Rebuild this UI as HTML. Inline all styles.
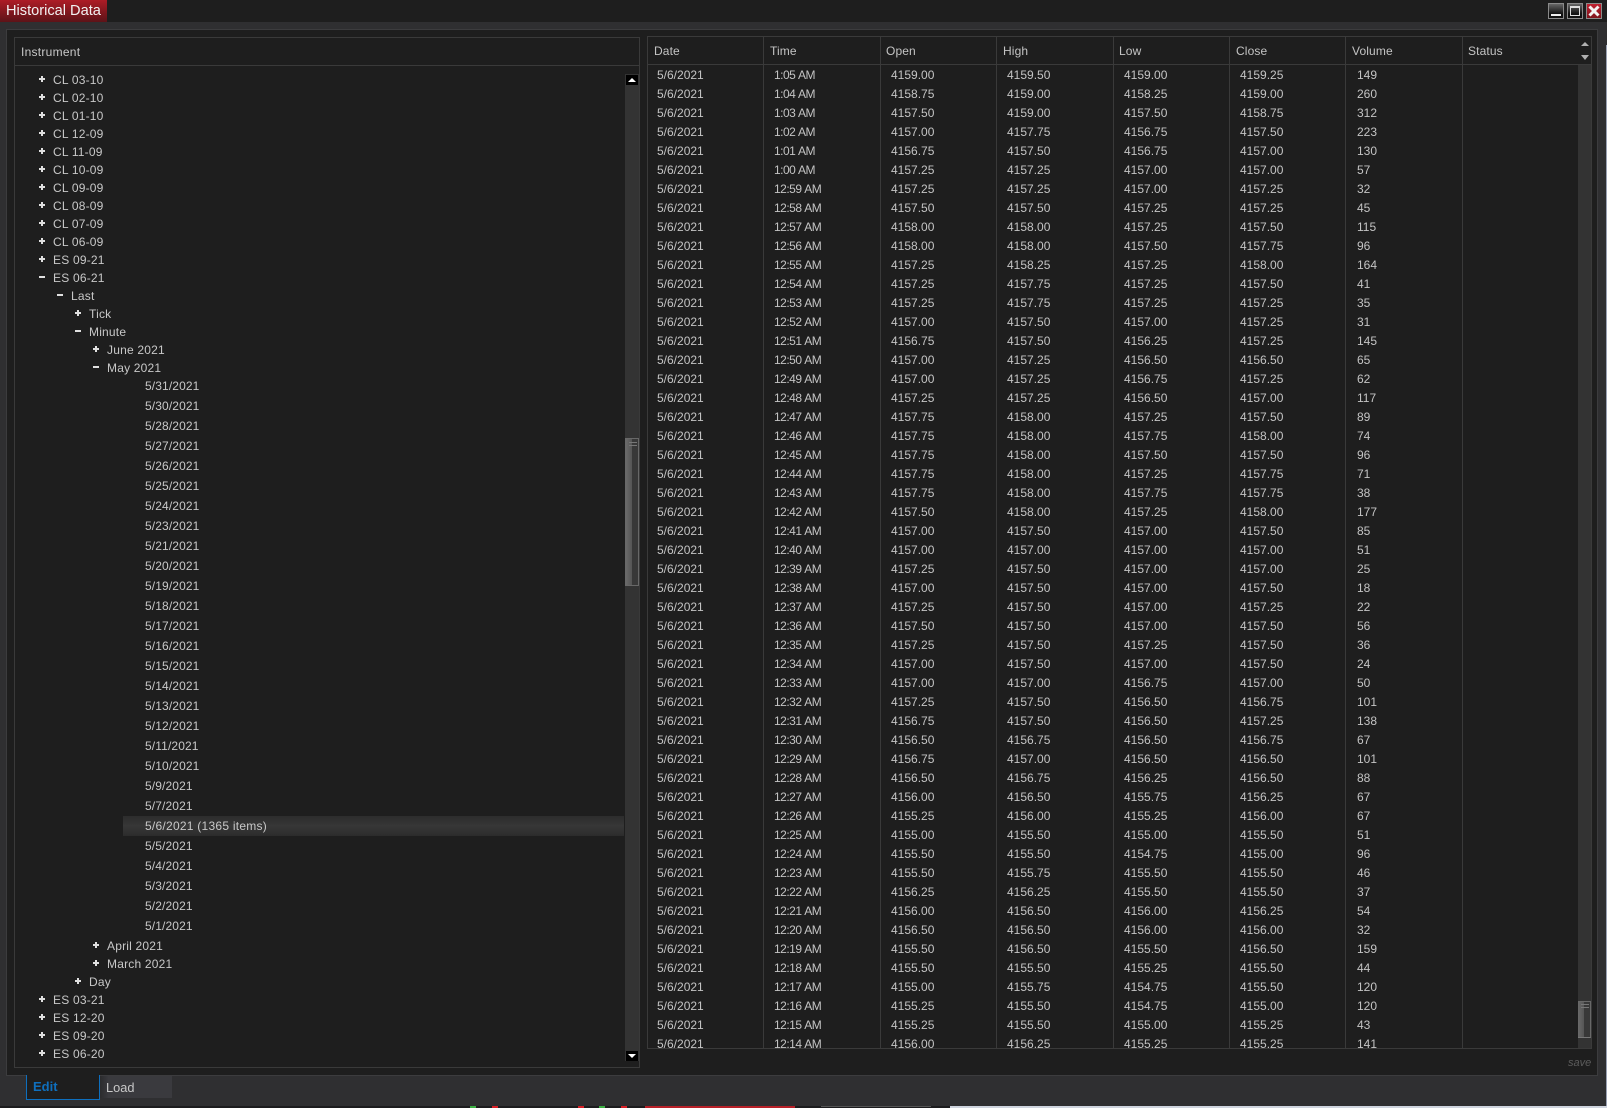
<!DOCTYPE html>
<html><head><meta charset="utf-8"><title>Historical Data</title>
<style>
html,body{margin:0;padding:0;background:#2f2f31}
body{position:relative;width:1607px;height:1108px;overflow:hidden;font:12px "Liberation Sans",Arial,sans-serif;color:#c8c8c8}
.a{position:absolute;box-sizing:border-box}
#top{left:0;top:0;width:1607px;height:22px;background:#1e1e1e}
#title{left:0;top:0;width:107px;height:22px;background:linear-gradient(#ad1c26,#5d1318);color:#f2f2f2;font-size:14.6px;line-height:23px;padding-left:6px;white-space:nowrap}
.b{top:3px;width:16px;height:16px;border:1px solid #8a8a8a;background:linear-gradient(#666,#111 70%)}
#main{left:6px;top:29px;width:1592px;height:1047px;background:#1e1e1e;border:1px solid #3c3c3e}
#left{left:14px;top:37px;width:626px;height:1031px;border:1px solid #3a3a3a}
#lh{left:14px;top:37px;width:626px;height:29px;border:1px solid #3a3a3a;line-height:29px;padding-left:6px;letter-spacing:.26px}
#tree{left:0;top:70px;width:625px}
.t{position:relative;height:18px;line-height:18px;white-space:nowrap;letter-spacing:.2px}
.d{position:relative;height:20px;line-height:20px;padding-left:145px;letter-spacing:.12px}
.l0{padding-left:53px}.l1{padding-left:71px}.l2{padding-left:89px}.l3{padding-left:107px}
.p:before,.m:before{content:"";position:absolute;height:2px;width:6px;top:7px;background:#e0e0e0}
.p:after{content:"";position:absolute;height:6px;width:2px;top:5px;background:#e0e0e0}
.l0:before{left:39px}.l0.p:after{left:41px}
.l1:before{left:57px}.l1.p:after{left:59px}
.l2:before{left:75px}.l2.p:after{left:77px}
.l3:before{left:93px}.l3.p:after{left:95px}
#sel{background:linear-gradient(#2c2c2c,#373737 50%,#2c2c2c);margin-left:123px;padding-left:22px;width:501px;box-sizing:border-box;letter-spacing:.25px}
#ltrack{left:625px;top:74px;width:14px;height:987px;background:#333}
.ab{left:626px;width:12px;height:10px;background:#000}
.th{border:1px solid #686868;background:linear-gradient(90deg,#6a6a6a,#555 50%,#383838 52%,#383838)}
.g{height:1px;background:#777}
#tbl{left:647px;top:36px;width:945px;height:1013px;border:1px solid #3a3a3a;overflow:hidden}
#hd{left:647px;top:36px;width:945px;height:29px;border:1px solid #3a3a3a}
.v{top:36px;width:1px;height:1012px;background:#3a3a3a}
.h{top:37px;line-height:28px;color:#c4c4c4;letter-spacing:.12px}
#rows{left:0;top:65px;width:1578px;height:983px;overflow:hidden}
.r{position:relative;height:19px;line-height:19px;color:#c4c4c4;white-space:nowrap;top:1px}
.r i{position:absolute;font-style:normal;top:0}
.r i:nth-child(1){left:657px}.r i:nth-child(2){left:774px;letter-spacing:-.5px;word-spacing:.5px}.r i:nth-child(3){left:891px}.r i:nth-child(4){left:1007px}.r i:nth-child(5){left:1124px}.r i:nth-child(6){left:1240px}.r i:nth-child(7){left:1357px}
#rtrack{left:1578px;top:64px;width:13px;height:984px;background:#333}
#rcap{left:1578px;top:37px;width:13px;height:27px;background:#1e1e1e}
.tri{width:0;height:0;border-left:4px solid transparent;border-right:4px solid transparent}
</style></head><body>
<div class="a" id="top"></div>
<div class="a" id="title">Historical Data</div>
<div class="a b" style="left:1548px"><div class="a" style="left:2px;top:10px;width:10px;height:2px;background:#eee"></div></div>
<div class="a b" style="left:1567px"><div class="a" style="left:2px;top:2px;width:10px;height:10px;border:1px solid #ddd;border-top-width:2px"></div></div>
<div class="a b" style="left:1586px;background:linear-gradient(#c02030,#7d141c)"><svg class="a" style="left:1px;top:1px" width="12" height="12" viewBox="0 0 12 12"><path d="M1.5 1.5L10.5 10.5M10.5 1.5L1.5 10.5" stroke="#f2f2f2" stroke-width="3" fill="none"/></svg></div>
<div class="a" style="left:1606px;top:45px;width:1px;height:1061px;background:#9aa2b4"></div>
<div class="a" id="main"></div>
<div class="a" id="left">
<div class="a" id="tree" style="left:-15px;top:33px">
<div class="t l0 p">CL 03-10</div><div class="t l0 p">CL 02-10</div><div class="t l0 p">CL 01-10</div><div class="t l0 p">CL 12-09</div><div class="t l0 p">CL 11-09</div><div class="t l0 p">CL 10-09</div><div class="t l0 p">CL 09-09</div><div class="t l0 p">CL 08-09</div><div class="t l0 p">CL 07-09</div><div class="t l0 p">CL 06-09</div><div class="t l0 p">ES 09-21</div><div class="t l0 m">ES 06-21</div>
<div class="t l1 m">Last</div><div class="t l2 p">Tick</div><div class="t l2 m">Minute</div><div class="t l3 p">June 2021</div><div class="t l3 m">May 2021</div>
<div style="margin-top:-1px"></div>
<div class="d">5/31/2021</div><div class="d">5/30/2021</div><div class="d">5/28/2021</div><div class="d">5/27/2021</div><div class="d">5/26/2021</div><div class="d">5/25/2021</div><div class="d">5/24/2021</div><div class="d">5/23/2021</div><div class="d">5/21/2021</div><div class="d">5/20/2021</div><div class="d">5/19/2021</div><div class="d">5/18/2021</div><div class="d">5/17/2021</div><div class="d">5/16/2021</div><div class="d">5/15/2021</div><div class="d">5/14/2021</div><div class="d">5/13/2021</div><div class="d">5/12/2021</div><div class="d">5/11/2021</div><div class="d">5/10/2021</div><div class="d">5/9/2021</div><div class="d">5/7/2021</div>
<div class="d" id="sel">5/6/2021 (1365 items)</div>
<div class="d">5/5/2021</div><div class="d">5/4/2021</div><div class="d">5/3/2021</div><div class="d">5/2/2021</div><div class="d">5/1/2021</div>
<div style="height:1px"></div>
<div class="t l3 p">April 2021</div><div class="t l3 p">March 2021</div><div class="t l2 p">Day</div><div class="t l0 p">ES 03-21</div><div class="t l0 p">ES 12-20</div><div class="t l0 p">ES 09-20</div><div class="t l0 p">ES 06-20</div>
</div>
</div>
<div class="a" id="lh">Instrument</div>
<div class="a" id="ltrack"></div>
<div class="a ab" style="top:75px"><div class="a tri" style="left:2px;top:3px;border-bottom:4px solid #fff"></div></div>
<div class="a ab" style="top:1051px"><div class="a tri" style="left:2px;top:3px;border-top:4px solid #fff"></div></div>
<div class="a th" style="left:625px;top:438px;width:14px;height:148px"><div class="a g" style="left:3px;top:3px;width:8px"></div><div class="a g" style="left:3px;top:6px;width:8px"></div></div>
<div class="a" id="tbl"></div>
<div class="a" id="hd"></div>
<div class="a v" style="left:763px"></div><div class="a v" style="left:880px"></div><div class="a v" style="left:996px"></div><div class="a v" style="left:1113px"></div><div class="a v" style="left:1229px"></div><div class="a v" style="left:1345px"></div><div class="a v" style="left:1462px"></div>
<div class="a h" style="left:654px">Date</div><div class="a h" style="left:770px">Time</div><div class="a h" style="left:886px">Open</div><div class="a h" style="left:1003px">High</div><div class="a h" style="left:1119px">Low</div><div class="a h" style="left:1236px">Close</div><div class="a h" style="left:1352px">Volume</div><div class="a h" style="left:1468px">Status</div>
<div class="a" id="rows">
<div class="r"><i>5/6/2021</i><i>1:05 AM</i><i>4159.00</i><i>4159.50</i><i>4159.00</i><i>4159.25</i><i>149</i></div>
<div class="r"><i>5/6/2021</i><i>1:04 AM</i><i>4158.75</i><i>4159.00</i><i>4158.25</i><i>4159.00</i><i>260</i></div>
<div class="r"><i>5/6/2021</i><i>1:03 AM</i><i>4157.50</i><i>4159.00</i><i>4157.50</i><i>4158.75</i><i>312</i></div>
<div class="r"><i>5/6/2021</i><i>1:02 AM</i><i>4157.00</i><i>4157.75</i><i>4156.75</i><i>4157.50</i><i>223</i></div>
<div class="r"><i>5/6/2021</i><i>1:01 AM</i><i>4156.75</i><i>4157.50</i><i>4156.75</i><i>4157.00</i><i>130</i></div>
<div class="r"><i>5/6/2021</i><i>1:00 AM</i><i>4157.25</i><i>4157.25</i><i>4157.00</i><i>4157.00</i><i>57</i></div>
<div class="r"><i>5/6/2021</i><i>12:59 AM</i><i>4157.25</i><i>4157.25</i><i>4157.00</i><i>4157.25</i><i>32</i></div>
<div class="r"><i>5/6/2021</i><i>12:58 AM</i><i>4157.50</i><i>4157.50</i><i>4157.25</i><i>4157.25</i><i>45</i></div>
<div class="r"><i>5/6/2021</i><i>12:57 AM</i><i>4158.00</i><i>4158.00</i><i>4157.25</i><i>4157.50</i><i>115</i></div>
<div class="r"><i>5/6/2021</i><i>12:56 AM</i><i>4158.00</i><i>4158.00</i><i>4157.50</i><i>4157.75</i><i>96</i></div>
<div class="r"><i>5/6/2021</i><i>12:55 AM</i><i>4157.25</i><i>4158.25</i><i>4157.25</i><i>4158.00</i><i>164</i></div>
<div class="r"><i>5/6/2021</i><i>12:54 AM</i><i>4157.25</i><i>4157.75</i><i>4157.25</i><i>4157.50</i><i>41</i></div>
<div class="r"><i>5/6/2021</i><i>12:53 AM</i><i>4157.25</i><i>4157.75</i><i>4157.25</i><i>4157.25</i><i>35</i></div>
<div class="r"><i>5/6/2021</i><i>12:52 AM</i><i>4157.00</i><i>4157.50</i><i>4157.00</i><i>4157.25</i><i>31</i></div>
<div class="r"><i>5/6/2021</i><i>12:51 AM</i><i>4156.75</i><i>4157.50</i><i>4156.25</i><i>4157.25</i><i>145</i></div>
<div class="r"><i>5/6/2021</i><i>12:50 AM</i><i>4157.00</i><i>4157.25</i><i>4156.50</i><i>4156.50</i><i>65</i></div>
<div class="r"><i>5/6/2021</i><i>12:49 AM</i><i>4157.00</i><i>4157.25</i><i>4156.75</i><i>4157.25</i><i>62</i></div>
<div class="r"><i>5/6/2021</i><i>12:48 AM</i><i>4157.25</i><i>4157.25</i><i>4156.50</i><i>4157.00</i><i>117</i></div>
<div class="r"><i>5/6/2021</i><i>12:47 AM</i><i>4157.75</i><i>4158.00</i><i>4157.25</i><i>4157.50</i><i>89</i></div>
<div class="r"><i>5/6/2021</i><i>12:46 AM</i><i>4157.75</i><i>4158.00</i><i>4157.75</i><i>4158.00</i><i>74</i></div>
<div class="r"><i>5/6/2021</i><i>12:45 AM</i><i>4157.75</i><i>4158.00</i><i>4157.50</i><i>4157.50</i><i>96</i></div>
<div class="r"><i>5/6/2021</i><i>12:44 AM</i><i>4157.75</i><i>4158.00</i><i>4157.25</i><i>4157.75</i><i>71</i></div>
<div class="r"><i>5/6/2021</i><i>12:43 AM</i><i>4157.75</i><i>4158.00</i><i>4157.75</i><i>4157.75</i><i>38</i></div>
<div class="r"><i>5/6/2021</i><i>12:42 AM</i><i>4157.50</i><i>4158.00</i><i>4157.25</i><i>4158.00</i><i>177</i></div>
<div class="r"><i>5/6/2021</i><i>12:41 AM</i><i>4157.00</i><i>4157.50</i><i>4157.00</i><i>4157.50</i><i>85</i></div>
<div class="r"><i>5/6/2021</i><i>12:40 AM</i><i>4157.00</i><i>4157.00</i><i>4157.00</i><i>4157.00</i><i>51</i></div>
<div class="r"><i>5/6/2021</i><i>12:39 AM</i><i>4157.25</i><i>4157.50</i><i>4157.00</i><i>4157.00</i><i>25</i></div>
<div class="r"><i>5/6/2021</i><i>12:38 AM</i><i>4157.00</i><i>4157.50</i><i>4157.00</i><i>4157.50</i><i>18</i></div>
<div class="r"><i>5/6/2021</i><i>12:37 AM</i><i>4157.25</i><i>4157.50</i><i>4157.00</i><i>4157.25</i><i>22</i></div>
<div class="r"><i>5/6/2021</i><i>12:36 AM</i><i>4157.50</i><i>4157.50</i><i>4157.00</i><i>4157.50</i><i>56</i></div>
<div class="r"><i>5/6/2021</i><i>12:35 AM</i><i>4157.25</i><i>4157.50</i><i>4157.25</i><i>4157.50</i><i>36</i></div>
<div class="r"><i>5/6/2021</i><i>12:34 AM</i><i>4157.00</i><i>4157.50</i><i>4157.00</i><i>4157.50</i><i>24</i></div>
<div class="r"><i>5/6/2021</i><i>12:33 AM</i><i>4157.00</i><i>4157.00</i><i>4156.75</i><i>4157.00</i><i>50</i></div>
<div class="r"><i>5/6/2021</i><i>12:32 AM</i><i>4157.25</i><i>4157.50</i><i>4156.50</i><i>4156.75</i><i>101</i></div>
<div class="r"><i>5/6/2021</i><i>12:31 AM</i><i>4156.75</i><i>4157.50</i><i>4156.50</i><i>4157.25</i><i>138</i></div>
<div class="r"><i>5/6/2021</i><i>12:30 AM</i><i>4156.50</i><i>4156.75</i><i>4156.50</i><i>4156.75</i><i>67</i></div>
<div class="r"><i>5/6/2021</i><i>12:29 AM</i><i>4156.75</i><i>4157.00</i><i>4156.50</i><i>4156.50</i><i>101</i></div>
<div class="r"><i>5/6/2021</i><i>12:28 AM</i><i>4156.50</i><i>4156.75</i><i>4156.25</i><i>4156.50</i><i>88</i></div>
<div class="r"><i>5/6/2021</i><i>12:27 AM</i><i>4156.00</i><i>4156.50</i><i>4155.75</i><i>4156.25</i><i>67</i></div>
<div class="r"><i>5/6/2021</i><i>12:26 AM</i><i>4155.25</i><i>4156.00</i><i>4155.25</i><i>4156.00</i><i>67</i></div>
<div class="r"><i>5/6/2021</i><i>12:25 AM</i><i>4155.00</i><i>4155.50</i><i>4155.00</i><i>4155.50</i><i>51</i></div>
<div class="r"><i>5/6/2021</i><i>12:24 AM</i><i>4155.50</i><i>4155.50</i><i>4154.75</i><i>4155.00</i><i>96</i></div>
<div class="r"><i>5/6/2021</i><i>12:23 AM</i><i>4155.50</i><i>4155.75</i><i>4155.50</i><i>4155.50</i><i>46</i></div>
<div class="r"><i>5/6/2021</i><i>12:22 AM</i><i>4156.25</i><i>4156.25</i><i>4155.50</i><i>4155.50</i><i>37</i></div>
<div class="r"><i>5/6/2021</i><i>12:21 AM</i><i>4156.00</i><i>4156.50</i><i>4156.00</i><i>4156.25</i><i>54</i></div>
<div class="r"><i>5/6/2021</i><i>12:20 AM</i><i>4156.50</i><i>4156.50</i><i>4156.00</i><i>4156.00</i><i>32</i></div>
<div class="r"><i>5/6/2021</i><i>12:19 AM</i><i>4155.50</i><i>4156.50</i><i>4155.50</i><i>4156.50</i><i>159</i></div>
<div class="r"><i>5/6/2021</i><i>12:18 AM</i><i>4155.50</i><i>4155.50</i><i>4155.25</i><i>4155.50</i><i>44</i></div>
<div class="r"><i>5/6/2021</i><i>12:17 AM</i><i>4155.00</i><i>4155.75</i><i>4154.75</i><i>4155.50</i><i>120</i></div>
<div class="r"><i>5/6/2021</i><i>12:16 AM</i><i>4155.25</i><i>4155.50</i><i>4154.75</i><i>4155.00</i><i>120</i></div>
<div class="r"><i>5/6/2021</i><i>12:15 AM</i><i>4155.25</i><i>4155.50</i><i>4155.00</i><i>4155.25</i><i>43</i></div>
<div class="r"><i>5/6/2021</i><i>12:14 AM</i><i>4156.00</i><i>4156.25</i><i>4155.25</i><i>4155.25</i><i>141</i></div>
</div>
<div class="a" id="rtrack"></div>
<div class="a" id="rcap"></div>
<div class="a" style="left:1578px;top:64px;width:13px;height:1px;background:#3a3a3a"></div>
<div class="a" style="left:1578px;top:1048px;width:14px;height:1px;background:#3a3a3a"></div>
<div class="a" style="left:1591px;top:36px;width:1px;height:1013px;background:#3a3a3a"></div>
<div class="a tri" style="left:1581px;top:42px;border-bottom:4px solid #b0b0b0"></div>
<div class="a tri" style="left:1581px;top:55px;border-top:5px solid #b0b0b0"></div>
<div class="a th" style="left:1578px;top:1001px;width:13px;height:37px;border-left:0;border-bottom:1px solid #777"><div class="a g" style="left:3px;top:2px;width:8px"></div><div class="a g" style="left:3px;top:5px;width:8px"></div></div>
<div class="a" style="left:1568px;top:1056px;font-style:italic;font-size:11px;line-height:15px;color:#5c5c5c">save</div>
<div class="a" style="left:26px;top:1075px;width:74px;height:25px;border:1px solid #0e6fbe;border-top:0;background:#1e1e1e;color:#0f6fbd;font-weight:bold;font-size:13px;line-height:23px;padding-left:6px">Edit</div>
<div class="a" style="left:100px;top:1076px;width:72px;height:22px;background:linear-gradient(90deg,#2b2b2d,#3a3a3e 12%);color:#c8c8c8;font-size:12.8px;line-height:23px;padding-left:6px">Load</div>
<div class="a" style="left:0;top:1106px;width:1607px;height:2px;background:#1c1c1e"></div>
<div class="a" style="left:470px;top:1106px;width:6px;height:2px;background:#3cb043"></div>
<div class="a" style="left:492px;top:1106px;width:6px;height:2px;background:#d62027"></div>
<div class="a" style="left:578px;top:1106px;width:6px;height:2px;background:#d62027"></div>
<div class="a" style="left:599px;top:1106px;width:6px;height:2px;background:#3cb043"></div>
<div class="a" style="left:621px;top:1106px;width:6px;height:2px;background:#d62027"></div>
<div class="a" style="left:645px;top:1106px;width:150px;height:2px;background:#b82028"></div>
<div class="a" style="left:821px;top:1106px;width:110px;height:1px;background:#555"></div>
<div class="a" style="left:950px;top:1106px;width:657px;height:2px;background:#cfd4de"></div>
</body></html>
